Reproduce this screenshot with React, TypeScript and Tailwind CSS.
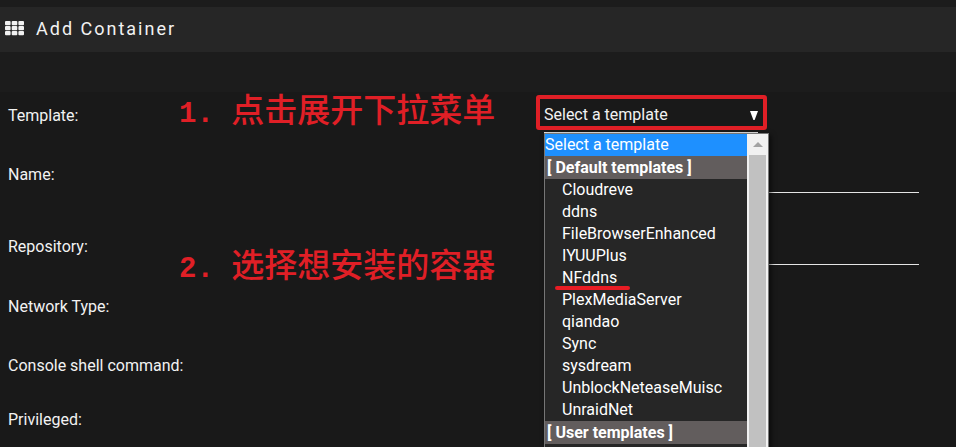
import type { ReactNode } from "react";

const templates = [
  "Cloudreve",
  "ddns",
  "FileBrowserEnhanced",
  "IYUUPlus",
  "NFddns",
  "PlexMediaServer",
  "qiandao",
  "Sync",
  "sysdream",
  "UnblockNeteaseMuisc",
  "UnraidNet",
];

function GridIcon() {
  return (
    <svg width="19" height="15" viewBox="0 0 19 15" fill="currentColor" aria-hidden="true">
      {[0, 5, 10].map((y) =>
        [0, 6.7, 13.4].map((x) => (
          <rect key={`${x}-${y}`} x={x} y={y} width="5.6" height="4.3" rx="1" />
        )),
      )}
    </svg>
  );
}

function Row({
  label,
  htmlFor,
  height,
  children,
}: {
  label: string;
  htmlFor?: string;
  height: string;
  children?: ReactNode;
}) {
  return (
    <div className={`flex items-start ${height}`}>
      <label htmlFor={htmlFor} className="w-[536px] shrink-0 leading-[26px]">
        {label}
      </label>
      {children}
    </div>
  );
}

function Note({ index, text, place }: { index: string; text: string; place: string }) {
  return (
    <p className={`absolute left-[179px] flex items-baseline whitespace-nowrap text-[#e01f26] ${place}`}>
      <span className="whitespace-pre font-['Liberation_Mono',monospace] text-[29px] leading-10 font-bold">
        {index}
      </span>
      <span className="font-['Noto_Sans_CJK_SC',sans-serif] text-[33px] leading-10 font-medium">{text}</span>
    </p>
  );
}

function GroupHeading({ children }: { children: ReactNode }) {
  return (
    <li role="presentation" className="h-[23px] bg-[#625d5d] pl-[2px] leading-[23px] font-bold">
      {children}
    </li>
  );
}

function TemplateMenu() {
  return (
    <div className="absolute top-[30px] left-0 z-10 flex w-[225px] border border-[#767676] bg-[#262626] text-white shadow-[2px_2px_5px_rgba(0,0,0,0.6)]">
      <ul role="listbox" aria-label="Templates" className="h-[400px] min-w-0 flex-1 overflow-hidden">
        <li role="option" aria-selected="true" className="h-[22px] bg-[#1e90ff] leading-[22px]">
          Select a template
        </li>
        <GroupHeading>[ Default templates ]</GroupHeading>
        {templates.map((name) => (
          <li key={name} role="option" aria-selected="false" className="relative h-[22px] pl-[17px] leading-[22px]">
            {name}
            {name === "NFddns" && (
              <span className="absolute top-[19px] left-[10px] h-1 w-[75px] rounded-full bg-[#e81c24]" />
            )}
          </li>
        ))}
        <GroupHeading>[ User templates ]</GroupHeading>
      </ul>
      <div className="flex w-[21px] flex-col bg-[#f1f1f1]">
        <div className="flex h-[21px] items-center justify-center">
          <svg width="10" height="5" viewBox="0 0 10 5" fill="#a3a3a3" aria-hidden="true">
            <path d="M5 0L10 5H0Z" />
          </svg>
        </div>
        <div className="mr-[2px] ml-[2px] flex-1 bg-[#c1c1c1]" />
      </div>
    </div>
  );
}

export default function App() {
  return (
    <div className="relative h-screen overflow-hidden bg-[#191919] font-['Roboto','Noto_Sans_CJK_SC',sans-serif] text-base text-[#f2f2f2]">
      <header className="border-t-[7px] border-[#1c1c1c] bg-[#262626]">
        <h1 className="flex h-[45px] items-center gap-3 pb-[2px] pl-[5px] text-lg tracking-[2px]">
          <GridIcon />
          Add Container
        </h1>
      </header>
      <div className="h-10 bg-[#1c1c1c]" />
      <form className="pt-[11px] pr-[37px] pl-2">
        <Row label="Template:" htmlFor="template" height="h-[59px]">
          <div className="relative w-[214px]">
            <select
              id="template"
              className="block h-[30px] w-full appearance-none border-b border-[#e5e5e5] bg-transparent pb-[6px] outline-none"
            >
              <option>Select a template</option>
            </select>
            <svg
              className="pointer-events-none absolute top-2 right-0"
              width="8"
              height="9"
              viewBox="0 0 8 9"
              fill="white"
              aria-hidden="true"
            >
              <path d="M0 0H8L4.6 9H3.4Z" />
            </svg>
            <div className="pointer-events-none absolute -top-2 -left-2 z-20 h-[35px] w-[231px] rounded-[3px] border-4 border-[#e01f26]" />
            <TemplateMenu />
          </div>
        </Row>
        <Row label="Name:" htmlFor="name" height="h-[72px]">
          <input id="name" className="h-[31px] min-w-0 flex-1 border-b border-[#e5e5e5] bg-transparent outline-none" />
        </Row>
        <Row label="Repository:" htmlFor="repository" height="h-[60px]">
          <input
            id="repository"
            className="h-[31px] min-w-0 flex-1 border-b border-[#e5e5e5] bg-transparent outline-none"
          />
        </Row>
        <Row label="Network Type:" height="h-[59px]" />
        <Row label="Console shell command:" height="h-[54px]" />
        <Row label="Privileged:" height="h-[54px]" />
      </form>
      <Note index="1. " text="点击展开下拉菜单" place="top-[88px]" />
      <Note index="2. " text="选择想安装的容器" place="top-[243px]" />
    </div>
  );
}
